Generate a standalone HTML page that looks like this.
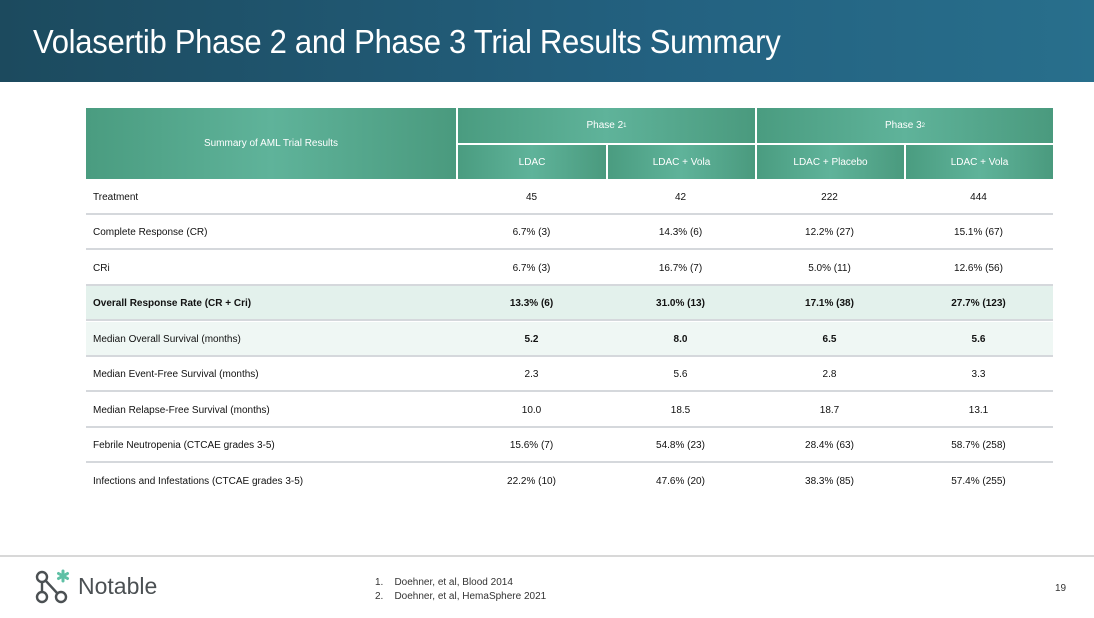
<!DOCTYPE html>
<html><head><meta charset="utf-8"><style>
body{margin:0;width:1094px;height:618px;background:#fff;position:relative;overflow:hidden;font-family:"Liberation Sans",sans-serif;}
.hdr{position:absolute;left:0;top:0;width:1094px;height:82px;background:linear-gradient(90deg,#1c4a5e,#236180 60%,#286f8c);}
.hdr h1{margin:0;position:absolute;left:33px;top:23px;font-weight:normal;color:#fff;font-size:33px;letter-spacing:-0.3px;transform:scaleX(0.94);transform-origin:left top;white-space:nowrap;}
.th{position:absolute;background:linear-gradient(90deg,#4a9c80,#5fb39a 50%,#4a9a7e);color:#fff;font-size:10px;display:flex;align-items:center;justify-content:center;}
.row{position:absolute;left:86px;width:967px;height:35px;border-bottom:2px solid #d5d8dc;font-size:10px;color:#111;box-sizing:border-box;}
.row span{position:absolute;top:12px;}
.c{width:149px;text-align:center;}
sup{font-size:6px;}
</style></head><body>
<div class="hdr"><h1>Volasertib Phase 2 and Phase 3 Trial Results Summary</h1></div>
<div class="th" style="left:86px;top:108px;width:370px;height:71px">Summary of AML Trial Results</div>
<div class="th" style="left:458px;top:108px;width:297px;height:35px">Phase 2<sup>1</sup></div>
<div class="th" style="left:757px;top:108px;width:296px;height:35px">Phase 3<sup>2</sup></div>
<div class="th" style="left:458px;top:145px;width:148px;height:34px">LDAC</div>
<div class="th" style="left:608px;top:145px;width:147px;height:34px">LDAC + Vola</div>
<div class="th" style="left:757px;top:145px;width:147px;height:34px">LDAC + Placebo</div>
<div class="th" style="left:906px;top:145px;width:147px;height:34px">LDAC + Vola</div>

<div class="row" style="top:180px"><span style="left:7px">Treatment</span><span class="c" style="left:371px">45</span><span class="c" style="left:520px">42</span><span class="c" style="left:669px">222</span><span class="c" style="left:818px">444</span></div>
<div class="row" style="top:215px"><span style="left:7px">Complete Response (CR)</span><span class="c" style="left:371px">6.7% (3)</span><span class="c" style="left:520px">14.3% (6)</span><span class="c" style="left:669px">12.2% (27)</span><span class="c" style="left:818px">15.1% (67)</span></div>
<div class="row" style="top:251px"><span style="left:7px">CRi</span><span class="c" style="left:371px">6.7% (3)</span><span class="c" style="left:520px">16.7% (7)</span><span class="c" style="left:669px">5.0% (11)</span><span class="c" style="left:818px">12.6% (56)</span></div>
<div class="row" style="top:286px;background:#e3f1ec;font-weight:bold"><span style="left:7px">Overall Response Rate (CR + Cri)</span><span class="c" style="left:371px">13.3% (6)</span><span class="c" style="left:520px">31.0% (13)</span><span class="c" style="left:669px">17.1% (38)</span><span class="c" style="left:818px">27.7% (123)</span></div>
<div class="row" style="top:322px;background:#eff7f4"><span style="left:7px">Median Overall Survival (months)</span><span class="c" style="left:371px;font-weight:bold">5.2</span><span class="c" style="left:520px;font-weight:bold">8.0</span><span class="c" style="left:669px;font-weight:bold">6.5</span><span class="c" style="left:818px;font-weight:bold">5.6</span></div>
<div class="row" style="top:357px"><span style="left:7px">Median Event-Free Survival (months)</span><span class="c" style="left:371px">2.3</span><span class="c" style="left:520px">5.6</span><span class="c" style="left:669px">2.8</span><span class="c" style="left:818px">3.3</span></div>
<div class="row" style="top:393px"><span style="left:7px">Median Relapse-Free Survival (months)</span><span class="c" style="left:371px">10.0</span><span class="c" style="left:520px">18.5</span><span class="c" style="left:669px">18.7</span><span class="c" style="left:818px">13.1</span></div>
<div class="row" style="top:428px"><span style="left:7px">Febrile Neutropenia (CTCAE grades 3-5)</span><span class="c" style="left:371px">15.6% (7)</span><span class="c" style="left:520px">54.8% (23)</span><span class="c" style="left:669px">28.4% (63)</span><span class="c" style="left:818px">58.7% (258)</span></div>
<div class="row" style="top:464px;border-bottom:none"><span style="left:7px">Infections and Infestations (CTCAE grades 3-5)</span><span class="c" style="left:371px">22.2% (10)</span><span class="c" style="left:520px">47.6% (20)</span><span class="c" style="left:669px">38.3% (85)</span><span class="c" style="left:818px">57.4% (255)</span></div>

<div style="position:absolute;left:0;top:555px;width:1094px;height:2px;background:#d8d8d8"></div>
<svg style="position:absolute;left:30px;top:565px" width="50" height="45" viewBox="0 0 50 45">
<g fill="none" stroke="#4b5053" stroke-width="2.4"><circle cx="12" cy="12" r="5"/><circle cx="12" cy="32" r="5"/><circle cx="31" cy="32" r="5"/><line x1="12" y1="17" x2="12" y2="27"/><line x1="15.5" y1="15.5" x2="27.5" y2="28.5"/></g>
<g stroke="#5fc0a5" stroke-width="3" stroke-linecap="round"><line x1="33" y1="6" x2="33" y2="16"/><line x1="28.5" y1="8.5" x2="37.5" y2="13.5"/><line x1="28.5" y1="13.5" x2="37.5" y2="8.5"/></g></svg>
<div style="position:absolute;left:78px;top:573px;font-size:23px;color:#4b5053">Notable</div>
<div style="position:absolute;left:375px;top:576px;font-size:10px;color:#333;line-height:14px">1.&nbsp;&nbsp;&nbsp;&nbsp;Doehner, et al, Blood 2014<br>2.&nbsp;&nbsp;&nbsp;&nbsp;Doehner, et al, HemaSphere 2021</div>
<div style="position:absolute;left:1055px;top:583px;font-size:10px;color:#333">19</div>
</body></html>
